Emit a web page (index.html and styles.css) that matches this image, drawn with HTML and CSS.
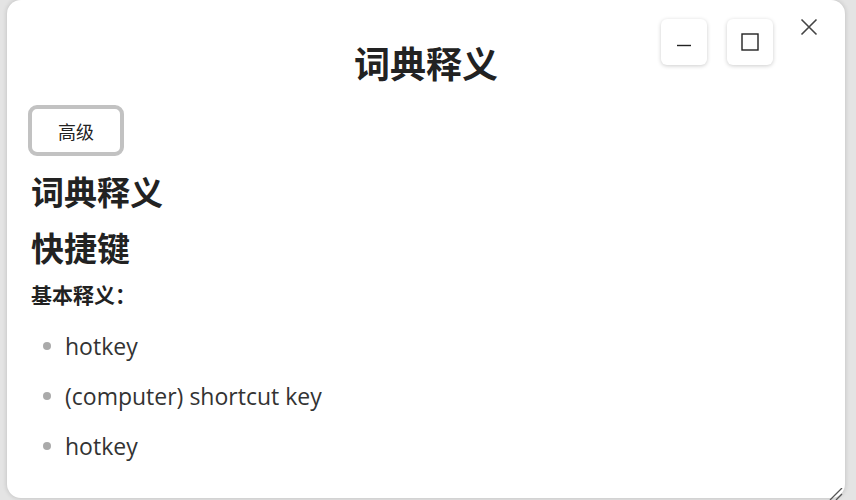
FILE: index.html
```html
<!DOCTYPE html>
<html lang="zh">
<head>
<meta charset="utf-8">
<link rel="stylesheet" href="styles.css">
</head>
<body>
<div class="window">
  <header class="titlebar">
    <h1 class="title">词典释义</h1>
    <div class="controls">
      <button class="ctl" aria-label="minimize"><svg width="14" height="14" viewBox="0 0 14 14"><path d="M0 10.5H14" stroke="#222" stroke-width="1.4"/></svg></button>
      <button class="ctl" aria-label="maximize"><svg width="18" height="18" viewBox="0 0 18 18"><rect x="1" y="1" width="16" height="16" fill="none" stroke="#222" stroke-width="1.4"/></svg></button>
      <button class="close" aria-label="close"><svg width="18" height="18" viewBox="0 0 18 18"><path d="M1.5 1.5L16.5 16.5M16.5 1.5L1.5 16.5" stroke="#444" stroke-width="1.6"/></svg></button>
    </div>
  </header>
  <main class="content">
    <button class="adv">高级</button>
    <h2 class="h2">词典释义</h2>
    <h2 class="h2 word">快捷键</h2>
    <h3 class="h3">基本释义：</h3>
    <ul class="defs">
      <li>hotkey</li>
      <li>(computer) shortcut key</li>
      <li>hotkey</li>
    </ul>
  </main>
  <svg class="grip" width="14" height="12" viewBox="0 0 14 12"><path d="M1 12L13 0M7 12L13 6" stroke="#555" stroke-width="1.3"/></svg>
</div>
</body>
</html>
```
FILE: styles.css
```css
* { box-sizing: border-box; }
html, body { margin: 0; height: 100%; }
body {
  background: #e4e4e4;
  font-family: "Noto Sans CJK SC", sans-serif;
  color: #222;
  overflow: hidden;
}
.window {
  position: relative;
  margin: 0 11px 0 7px;
  height: 498px;
  background: #fff;
  border-radius: 14px;
  box-shadow: 0 0 5px rgba(0,0,0,0.18);
}
.titlebar {
  position: relative;
  height: 96px;
  display: flex;
  justify-content: center;
}
.title {
  margin: 0;
  padding-top: 37px;
  font-size: 36px;
  font-weight: 700;
  line-height: 50px;
  color: #222;
  height: 96px;
}
.controls {
  position: absolute;
  top: 19px;
  right: 26px;
  display: flex;
  gap: 20px;
  align-items: flex-start;
}
.ctl {
  width: 46px;
  height: 46px;
  border: none;
  background: #fff;
  border-radius: 6px;
  box-shadow: 0 1px 4px rgba(0,0,0,0.2);
  display: flex;
  align-items: center;
  justify-content: center;
  padding: 0;
}
.close {
  border: none;
  background: none;
  padding: 0;
  width: 20px;
  height: 20px;
  display: flex;
  align-items: center;
  justify-content: center;
  margin: -2px 0 0 6px;
}
.content {
  padding: 9px 0 0 21px;
}
.adv {
  width: 96px;
  height: 51px;
  border: 4px solid #c2c2c2;
  border-radius: 9px;
  background: #fff;
  font-family: "Noto Sans CJK SC", sans-serif;
  font-size: 18px;
  color: #222;
  padding: 0;
}
.h2 {
  margin: 14px 0 0 3px;
  font-size: 33px;
  line-height: 42px;
  font-weight: 700;
}
.word { margin-top: 14px; }
.h3 {
  margin: 10px 0 0 3px;
  font-size: 21px;
  line-height: 32px;
  font-weight: 700;
}
.defs {
  margin: 11px 0 0 0;
  padding: 0 0 0 37px;
  list-style: none;
}
.defs li {
  position: relative;
  font-family: "Open Sans", sans-serif;
  font-size: 23px;
  line-height: 50px;
  color: #333;
}
.defs li::before {
  content: "";
  position: absolute;
  left: -22px;
  top: 21px;
  width: 8px;
  height: 8px;
  border-radius: 50%;
  background: #aaa;
}
.grip {
  position: absolute;
  right: 2px;
  bottom: -2px;
}
```
